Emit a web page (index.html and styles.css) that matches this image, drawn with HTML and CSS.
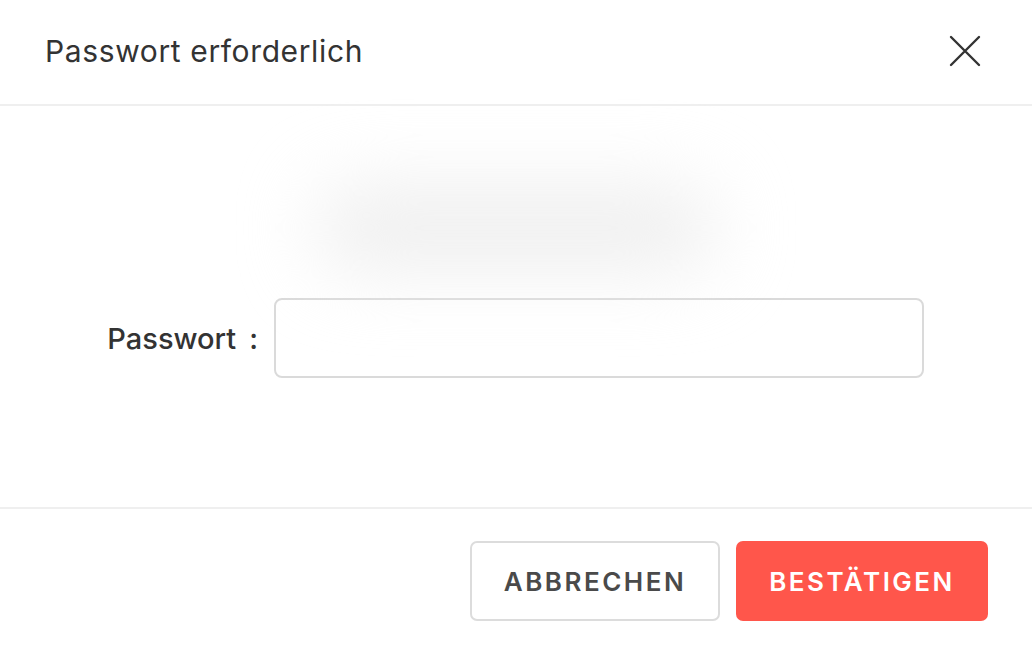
FILE: index.html
```html
<!DOCTYPE html>
<html lang="de">
<head>
<meta charset="utf-8">
<title>Passwort erforderlich</title>
<link rel="stylesheet" href="styles.css">
</head>
<body>
<div class="dialog">
  <header class="dialog-header">
    <h1 class="dialog-title">Passwort erforderlich</h1>
    <button class="close-btn" aria-label="Schließen">
      <svg width="32" height="32" viewBox="0 0 32 32" aria-hidden="true">
        <path d="M2 2 L30 30 M30 2 L2 30" stroke="#333" stroke-width="2.4" stroke-linecap="round" fill="none"/>
      </svg>
    </button>
  </header>
  <main class="dialog-body">
    <div class="preview">
      <div class="preview-blur"></div>
    </div>
    <div class="form-row">
      <label class="form-label" for="pw">Passwort<span class="colon">:</span></label>
      <input class="form-input" id="pw" type="password">
    </div>
  </main>
  <footer class="dialog-footer">
    <button class="btn btn-cancel">ABBRECHEN</button>
    <button class="btn btn-confirm">BESTÄTIGEN</button>
  </footer>
</div>
</body>
</html>
```

FILE: styles.css
```css
* { box-sizing: border-box; }
html, body {
  margin: 0;
  padding: 0;
  background: #ffffff;
}
body {
  font-family: Inter, "Liberation Sans", sans-serif;
  color: #333333;
}
.dialog {
  width: 1032px;
  height: 646px;
  background: #fff;
  display: flex;
  flex-direction: column;
}
.dialog-header {
  height: 106px;
  display: flex;
  align-items: center;
  justify-content: space-between;
  padding: 0 51px 2px 45px;
  border-bottom: 2px solid #efefef;
}
.dialog-title {
  margin: 0;
  font-size: 30px;
  font-weight: 400;
  letter-spacing: 0.62px;
  color: #333;
}
.close-btn {
  border: 0;
  background: none;
  padding: 0;
  width: 32px;
  height: 32px;
  display: flex;
  cursor: pointer;
}
.dialog-body {
  height: 401px;
  display: flex;
  flex-direction: column;
}
.preview {
  height: 192px;
  padding-top: 80px;
  display: flex;
  justify-content: center;
}
.preview-blur {
  width: 400px;
  height: 84px;
  border-radius: 42px;
  background: #efefef;
  filter: blur(36px);
}
.form-row {
  display: flex;
  align-items: center;
  height: 80px;
}
.form-label {
  width: 274px;
  padding-right: 16px;
  text-align: right;
  font-size: 29px;
  font-weight: 500;
  color: #333;
}
.colon {
  margin-left: 13px;
}
.form-input {
  width: 650px;
  height: 80px;
  border: 2px solid #dadada;
  border-radius: 8px;
  background: #fff;
  outline: none;
  font-size: 26px;
  padding: 0 16px;
}
.dialog-footer {
  flex: 1;
  border-top: 2px solid #efefef;
  display: flex;
  justify-content: flex-end;
  align-items: flex-start;
  gap: 16px;
  padding: 32px 44px 0 0;
}
.btn {
  height: 80px;
  border-radius: 7px;
  font-family: Inter, "Liberation Sans", sans-serif;
  font-size: 26px;
  font-weight: 600;
  letter-spacing: 2.5px;
  cursor: pointer;
  padding: 0;
}
.btn-cancel {
  width: 250px;
  background: #fff;
  border: 2px solid #dcdcdc;
  color: #4a4a4a;
}
.btn-confirm {
  width: 252px;
  background: #ff564b;
  border: 0;
  color: #fff;
}
```
